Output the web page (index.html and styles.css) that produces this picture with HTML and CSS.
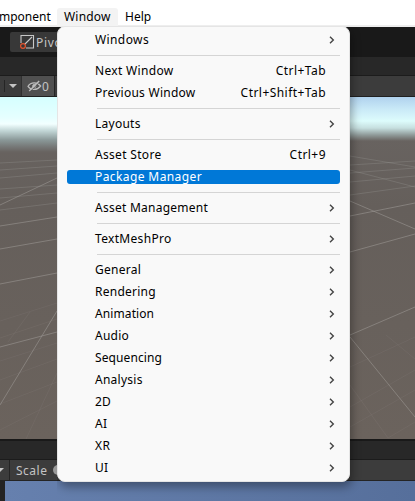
FILE: index.html
```html
<!DOCTYPE html>
<html lang="en">
<head>
<meta charset="utf-8">
<title>Window menu</title>
<link rel="stylesheet" href="styles.css">
</head>
<body>
<svg width="0" height="0" class="defs"><symbol id="chev" viewBox="0 0 6 8"><path d="M1 .8 4.3 4 1 7.2" fill="none" stroke="#444" stroke-width="1.4"/></symbol></svg>
<div class="app">
  <header class="menubar"><span class="crop">mponent</span><span class="open">Window</span><span>Help</span></header>
  <div class="tools"><div class="pivot">
    <svg width="15" height="16" viewBox="0 0 15 16"><path d="M1 9V1.5h12.5V14H6M4.5 10.5 12 3" fill="none" stroke="#c8c8c8" stroke-width="1.1"/><circle cx="3" cy="12" r="2.4" fill="#383838" stroke="#e5532d" stroke-width="1.2"/></svg><span>Pivot</span>
  </div></div>
  <div class="tabs"></div>
  <div class="scenebar"><div class="drop"><i class="tri"></i></div><div class="hidden-count">
    <svg width="15" height="12" viewBox="0 0 15 12" fill="none" stroke="#bcbcbc"><path d="M1 6.3C4 1.8 10 1.8 13.7 6 10 10.5 4 10.5 1 6.3Z" stroke-width="1.2"/><circle cx="7.3" cy="6" r="1.6" fill="#bcbcbc"/><path d="M3.2 11.5 13 1.5" stroke="#505050"/><path d="M2.2 11 12.2 1" stroke-width="1.4"/></svg><span>0</span>
  </div><div class="rest"></div></div>
  <div class="scene">
    <svg width="415" height="342" viewBox="0 0 415 342" fill="none" stroke="#a29f9b" stroke-width=".8">
      <g opacity=".65"><path d="M0 129 57 120M0 152 57 142M0 108 57 81M0 187 57 176M0 250 57 235M0 308 57 214M350 104 415 132M350 119 415 106M350 155 415 137M350 238 415 210M350 240 415 320"/></g>
      <g opacity=".35"><path d="M0 66 57 63M0 73 57 69M0 81 57 76M0 92 57 88M0 101 57 96M0 113 57 106M350 98 415 89M350 73 415 90M350 85 415 79M350 59 415 70M350 76 415 71M350 68 415 64"/></g>
      <g opacity=".14"><path d="M0 224 57 206M0 241 57 222M0 264 57 246M0 283 57 262M0 307 57 285M0 333 57 304M26 342 57 276M8 245 30 215M350 288 388 341 415 325M350 310 415 273M350 330 415 293M350 270 415 240M386 238 415 262"/></g>
    </svg><div class="sky"></div>
  </div>
  <div class="gametabs"></div>
  <div class="gamebar"><div class="aspect"><i class="tri"></i></div><span>Scale</span><i class="knob"></i></div>
  <div class="game"></div>
</div>
<nav class="menu">
  <div class="item"><span class="wide">Windows</span><svg><use href="#chev"/></svg></div>
  <hr>
  <div class="item"><span class="mid">Next Window</span><kbd>Ctrl+Tab</kbd></div>
  <div class="item"><span>Previous Window</span><kbd>Ctrl+Shift+Tab</kbd></div>
  <hr>
  <div class="item"><span>Layouts</span><svg><use href="#chev"/></svg></div>
  <hr>
  <div class="item"><span class="mid">Asset Store</span><kbd>Ctrl+9</kbd></div>
  <div class="item active"><span class="wide">Package Manager</span></div>
  <hr>
  <div class="item"><span>Asset Management</span><svg><use href="#chev"/></svg></div>
  <hr>
  <div class="item"><span class="mid">TextMeshPro</span><svg><use href="#chev"/></svg></div>
  <hr>
  <div class="item"><span>General</span><svg><use href="#chev"/></svg></div>
  <div class="item"><span>Rendering</span><svg><use href="#chev"/></svg></div>
  <div class="item"><span class="tight">Animation</span><svg><use href="#chev"/></svg></div>
  <div class="item"><span>Audio</span><svg><use href="#chev"/></svg></div>
  <div class="item"><span class="tight">Sequencing</span><svg><use href="#chev"/></svg></div>
  <div class="item"><span>Analysis</span><svg><use href="#chev"/></svg></div>
  <div class="item"><span>2D</span><svg><use href="#chev"/></svg></div>
  <div class="item"><span>AI</span><svg><use href="#chev"/></svg></div>
  <div class="item"><span class="wide">XR</span><svg><use href="#chev"/></svg></div>
  <div class="item"><span>UI</span><svg><use href="#chev"/></svg></div>
</nav>
</body>
</html>
```
FILE: styles.css
```css
* { box-sizing: border-box; }
body { margin: 0; width: 415px; height: 501px; overflow: hidden; position: relative; font: 12px "Noto Sans", sans-serif; color: #000; }
.defs { position: absolute; }
.app { display: flex; flex-direction: column; height: 501px; background: #191919; }
.menubar { height: 27px; flex: none; background: #fff; border-bottom: 2px solid #eee; display: flex; align-items: center; padding-top: 8px; line-height: 18px; }
.menubar span { height: 18px; }
.crop { width: 58px; margin-left: -1px; }
.menubar .open { width: 61px; background: #f3f3f3; border-radius: 3px 3px 0 0; padding-left: 7px; margin-right: 7px; letter-spacing: .2px; }
.tools { height: 30px; flex: none; padding: 5px 0 0 10px; }
.pivot { height: 20px; width: 70px; background: #383838; border-radius: 2px; display: flex; align-items: center; padding-left: 10px; gap: 1px; color: #c4c4c4; letter-spacing: .7px; }
.tabs { height: 19px; flex: none; background: #282828; border-bottom: 1px solid #1c1c1c; }
.scenebar { height: 21px; flex: none; background: #3c3c3c; border-bottom: 1px solid #202020; display: flex; }
.drop { width: 22px; display: flex; align-items: center; padding-left: 4px; border-right: 1px solid #303030; }
.drop::before { content: ""; width: 1px; height: 12px; background: #252525; }
.drop .tri { margin-left: 4px; }
.tri { width: 0; height: 0; border: 4px solid transparent; border-top-color: #c4c4c4; border-bottom: 0; }
.hidden-count { width: 33px; background: #505050; color: #c4c4c4; display: flex; align-items: center; padding-left: 5px; border-right: 1px solid #242424; }
.scene { height: 342px; flex: none; overflow: hidden; position: relative; background: linear-gradient(#686360 40px, #655f5b 110px, #6b635d 342px); }
.scene svg { display: block; }
.sky { position: absolute; inset: 0 0 auto; height: 56px; background: linear-gradient(#b0d2ee, #c9e9f7 12px, #ddfcfc 24px, #c6dfdf 31px, #8f9a99 38px, #686360 44px, #68636000 48px); }
.sky::before { content: ""; position: absolute; left: 0; top: 0; width: 57px; height: 56px; background: linear-gradient(#d5ffff, #e5ffff 20px, #f2ffff 27px, #c0d4d4 34px, #8a9898 43px, #757776 50px, #686360 55px); }
.gametabs { height: 21px; flex: none; background: #282828; border-top: 2px solid #191919; border-bottom: 1px solid #1c1c1c; }
.gamebar { height: 21px; flex: none; background: #3c3c3c; border-bottom: 1px solid #242424; display: flex; align-items: center; color: #c4c4c4; letter-spacing: .5px; }
.aspect { height: 20px; width: 10px; border-right: 1px solid #242424; margin-right: 6px; display: flex; align-items: center; }
.aspect .tri { margin-left: -4px; }
.knob { width: 10px; height: 10px; border-radius: 50%; background: #999; margin-left: 6px; }
.game { flex: 1; background: linear-gradient(90deg, #6680ae, #566f9b); border-left: 5px solid #242424; }
.menu { position: absolute; left: 57px; top: 26px; width: 293px; height: 456px; display: flex; flex-direction: column; background: #f9f9f9; border: 1px solid #e5e5e5; border-radius: 8px; padding: 2px 9px 0; box-shadow: 2px 5px 10px #0005; clip-path: inset(0 -15px -20px 0); letter-spacing: .25px; }
.item { height: 22px; flex: none; display: flex; align-items: center; justify-content: space-between; padding: 0 14px 0 28px; line-height: 14px; }
.item svg { width: 6px; height: 8px; margin-right: -9px; flex: none; }
.wide { letter-spacing: .4px; }
.mid { letter-spacing: .32px; }
.tight { letter-spacing: .1px; }
kbd { font: inherit; letter-spacing: .45px; }
.active { height: 14px; margin: 4px 0; background: #0078d7; color: #fff; border-radius: 3px; }
hr { width: 243px; height: 1px; flex: none; margin: 4px 0 4px 30px; border: 0; background: #d5d5d5; }
```
